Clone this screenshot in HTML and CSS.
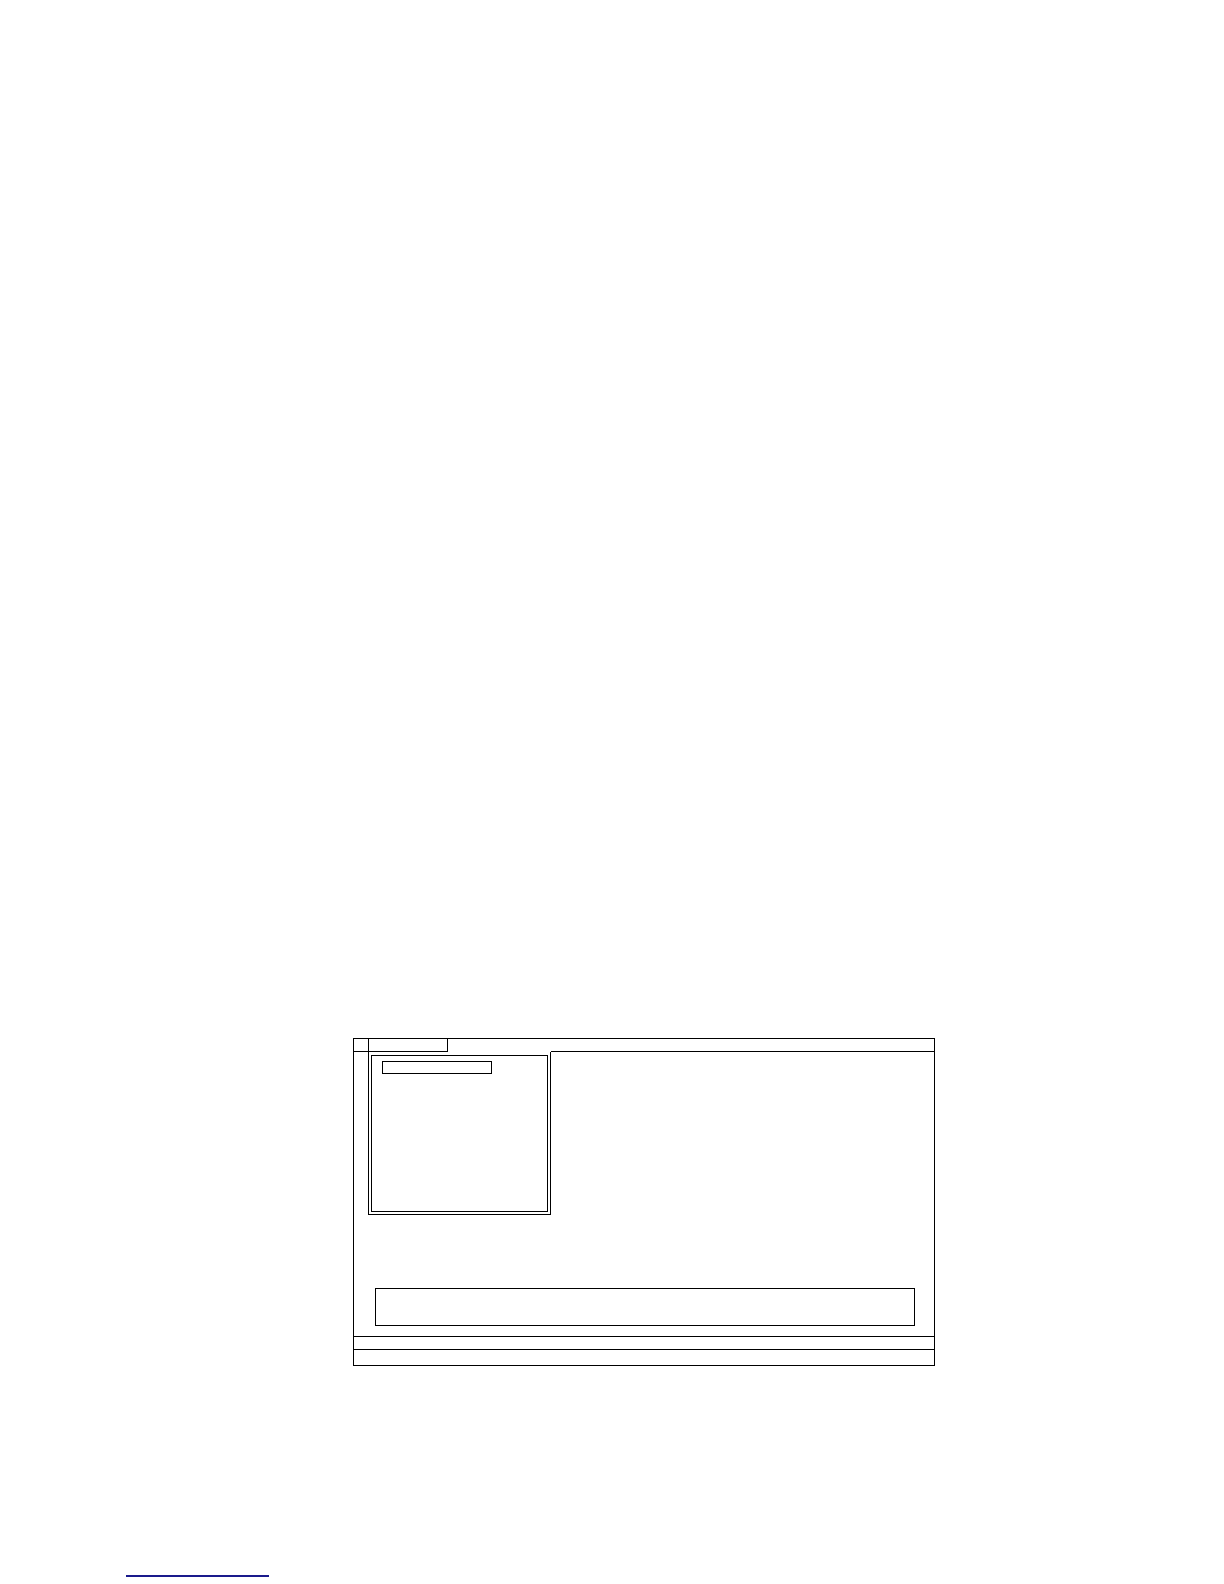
FILE: index.html
```html
<!DOCTYPE html>
<html>
<head>
<meta charset="utf-8">
<title>Dialog</title>
<link rel="stylesheet" href="styles.css">
</head>
<body>
<div class="window">
  <div class="tabs">
    <div class="tab-stub"></div>
    <div class="tab"></div>
  </div>
  <div class="content">
    <div class="gutter"></div>
    <div class="group">
      <div class="group-inner">
        <div class="field"></div>
      </div>
    </div>
    <div class="filler"></div>
  </div>
  <div class="memo"></div>
  <div class="status status-top"></div>
  <div class="status status-bottom"></div>
</div>
<a class="link" href="#"></a>
</body>
</html>
```
FILE: styles.css
```css
* { box-sizing: border-box; }
html, body { margin: 0; padding: 0; background: #fff; }
body { font-family: "Liberation Sans", Arial, sans-serif; }

.window {
  width: 582px;
  height: 328px;
  margin: 1038px 0 0 353px;
  border: 1px solid #000;
  display: flex;
  flex-direction: column;
}
.tabs { display: flex; height: 13px; flex: none; }
.tab-stub { width: 15px; border-right: 1px solid #000; border-bottom: 1px solid #000; }
.tab { width: 79px; border-right: 1px solid #000; border-bottom: 1px solid #000; }

.content { display: flex; height: 163px; flex: none; }
.gutter { width: 14px; }
.group {
  width: 183px;
  border: 1px solid #000;
  border-top: none;
  padding: 3px 2px 2px 2px;
}
.group-inner {
  height: 157px;
  border: 1px solid #000;
  padding: 5px 0 0 10px;
}
.field { width: 110px; height: 13px; border: 1px solid #000; }
.filler { flex: 1; margin-top: -1px; border-top: 1px solid #000; }

.memo {
  flex: none;
  width: 540px;
  height: 38px;
  margin: 73px 0 10px 21px;
  border: 1px solid #000;
}
.status { flex: none; border-top: 1px solid #000; }
.status-top { height: 13px; }
.status-bottom { height: 15px; }

.link {
  display: block;
  width: 143px;
  height: 2px;
  margin: 209px 0 0 126px;
  background: #1a1a8c;
}
```
